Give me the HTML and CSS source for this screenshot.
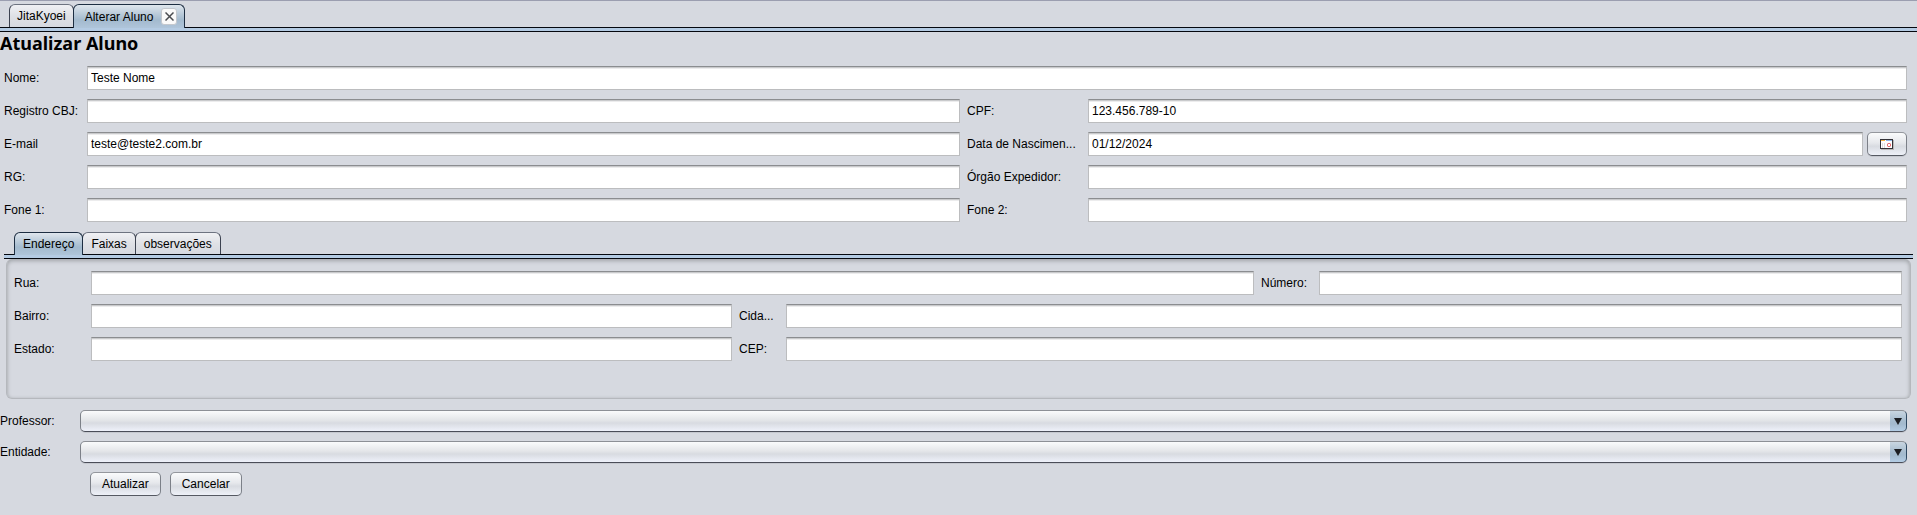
FILE: index.html
```html
<!DOCTYPE html>
<html lang="pt-BR">
<head>
<meta charset="utf-8">
<title>Alterar Aluno</title>
<link rel="stylesheet" href="styles.css">
</head>
<body>
<nav class="tabs">
  <div class="tab"><button type="button" class="tab-label">JitaKyoei</button></div>
  <div class="tab tab-active">
    <button type="button" class="tab-label">Alterar Aluno</button>
    <button type="button" class="close" aria-label="Fechar">
      <svg width="9" height="9" viewBox="0 0 9 9"><path d="M.5.5l8 8M8.500.5l-8 8" stroke="#4a4c50" stroke-width="1.500" fill="none"/></svg>
    </button>
  </div>
</nav>
<div class="strip"></div>
<main>
  <h1>Atualizar Aluno</h1>
  <form>
    <div class="grid student">
      <label for="nome">Nome:</label>
      <input class="field wide" id="nome" type="text" value="Teste Nome">
      <label for="cbj">Registro CBJ:</label>
      <input class="field" id="cbj" type="text">
      <label class="second" for="cpf">CPF:</label>
      <input class="field" id="cpf" type="text" value="123.456.789-10">
      <label for="email">E-mail</label>
      <input class="field" id="email" type="text" value="teste@teste2.com.br">
      <label class="second" for="nasc">Data de Nascimen...</label>
      <div class="date">
        <input class="field" id="nasc" type="text" value="01/12/2024">
        <button type="button" class="button calendar" aria-label="Calendário">
          <svg width="14" height="11" viewBox="0 0 14 11" shape-rendering="crispEdges">
            <path d="M1 1h13v10H1z" fill="#b9b6b6"/>
            <path d="M0 0h13v10H0z" fill="#333238"/>
            <path d="M1 1h11v8H1z" fill="#fff"/>
            <path d="M1 1h4v1H1z" fill="#f5b343"/>
            <path d="M6 1h6v1H6z" fill="#8fb6e8"/>
            <path d="M2 4h1v5H2zM4 4h1v5H4z" fill="#dedede"/>
            <rect x="7.500" y="4.500" width="3" height="3" rx="1" fill="none" stroke="#e0434a" shape-rendering="auto"/>
          </svg>
        </button>
      </div>
      <label for="rg">RG:</label>
      <input class="field" id="rg" type="text">
      <label class="second" for="orgao">Órgão Expedidor:</label>
      <input class="field" id="orgao" type="text">
      <label for="fone1">Fone 1:</label>
      <input class="field" id="fone1" type="text">
      <label class="second" for="fone2">Fone 2:</label>
      <input class="field" id="fone2" type="text">
    </div>

    <section class="details">
      <div class="tabs tabs-inner">
        <div class="tab tab-active"><button type="button" class="tab-label">Endereço</button></div>
        <div class="tab"><button type="button" class="tab-label">Faixas</button></div>
        <div class="tab"><button type="button" class="tab-label">observações</button></div>
      </div>
      <div class="strip"></div>
      <div class="panel">
        <div class="grid street">
          <label for="rua">Rua:</label>
          <input class="field" id="rua" type="text">
          <label class="second" for="numero">Número:</label>
          <input class="field" id="numero" type="text">
        </div>
        <div class="grid city">
          <label for="bairro">Bairro:</label>
          <input class="field" id="bairro" type="text">
          <label class="second" for="cidade">Cida...</label>
          <input class="field" id="cidade" type="text">
          <label for="estado">Estado:</label>
          <input class="field" id="estado" type="text">
          <label class="second" for="cep">CEP:</label>
          <input class="field" id="cep" type="text">
        </div>
      </div>
    </section>

    <div class="combos">
      <label for="professor">Professor:</label>
      <div class="combo"><select id="professor"><option></option></select></div>
      <label for="entidade">Entidade:</label>
      <div class="combo"><select id="entidade"><option></option></select></div>
    </div>
    <div class="actions">
      <button type="button" class="button">Atualizar</button>
      <button type="button" class="button">Cancelar</button>
    </div>
  </form>
</main>
</body>
</html>
```
FILE: styles.css
```css
* { box-sizing: border-box; }

body {
  margin: 0;
  border-top: 1px solid #9b9eb0;
  background: #d6d9e0;
  color: #000;
  font: 12px/16px "Liberation Sans", Arial, sans-serif;
}

button, input, select { margin: 0; color: inherit; font: inherit; }

.tabs {
  display: flex;
  padding: 3px 9px 0;
}

.tab {
  display: flex;
  align-items: center;
  height: 23px;
  padding: 0 7px;
  border: 1px solid #3c4250;
  border-top-color: #6d7380;
  border-bottom: 0;
  border-radius: 6px 6px 0 0;
  background: linear-gradient(#f0f1f4, #dfe1e6 50%, #d6d9e0);
}

.tab + .tab { margin-left: -1px; }

.tab-active {
  position: relative;
  gap: 8px;
  height: 24px;
  margin-bottom: -1px;
  padding: 0 7px 0 11px;
  border-color: #1d2e42;
  background: linear-gradient(#dfe6ed, #b9cad9 40%, #a3bace 65%, #afc5da);
}

.tab-label {
  padding: 0;
  border: 0;
  background: none;
}

.close {
  display: grid;
  place-items: center;
  width: 16px;
  height: 17px;
  padding: 0;
  border: 1px solid #c4c8ce;
  border-radius: 3px;
  background: #fafafa;
}

.strip {
  height: 5px;
  border: solid #05080f;
  border-width: 1px 0;
  background: #b4cbe3;
}

h1 {
  margin: 0;
  font: bold 18px/22px "Noto Sans", "Open Sans", sans-serif;
}

.grid {
  display: grid;
  align-items: center;
  row-gap: 9px;
}

.student {
  grid-template-columns: 83px 873fr 128px 819fr;
  padding: 12px 10px 0 4px;
}

.wide { grid-column: 2 / -1; }

.second { padding-left: 7px; white-space: nowrap; }

.field {
  width: 100%;
  min-width: 0;
  height: 24px;
  padding: 0 3px;
  border: 1px solid #bcbdbf;
  border-top-color: #8b8d90;
  border-radius: 0;
  outline: 0;
  background: linear-gradient(#c9cacc 1px, #ececed 1px, #ececed 2px, #fff 2px);
}

.date { display: flex; gap: 4px; }
.date .field { flex: 1; }

.button {
  height: 24px;
  padding: 0 11px;
  border: 1px solid #7c8088;
  border-top-color: #94979d;
  border-bottom-color: #555962;
  border-radius: 5px;
  background: linear-gradient(#fafbfc, #e6e8ec 45%, #d8dbe1 60%, #eef1f8);
  box-shadow: 0 1px #c5c8cf;
}

.calendar {
  display: grid;
  place-items: center;
  width: 40px;
  padding: 0;
}

.details { padding: 10px 4px 0; }

.tabs-inner { padding: 0 10px; }
.tabs-inner .tab { height: 22px; padding: 0 8px; }
.tabs-inner .tab-active { height: 23px; }

.panel {
  margin: 0 2px;
  padding: 12px 8px 37px 7px;
  border: solid #b5b8bd;
  border-width: 0 1px 1px;
  border-radius: 6px;
  box-shadow: inset 0 2px 4px #a3a6ab, inset 0 0 3px #c3c6ca;
}

.street { grid-template-columns: 77px 1163fr 65px 583fr; }
.city { grid-template-columns: 77px 641fr 54px 1116fr; margin-top: 9px; }

.combos {
  display: grid;
  grid-template-columns: 80px 1fr;
  align-items: center;
  row-gap: 9px;
  padding: 11px 10px 0 0;
}

.combo {
  position: relative;
  display: flex;
  height: 22px;
}

.combo select {
  width: 100%;
  appearance: none;
  padding: 0 24px 0 6px;
  border: 1px solid #7c8088;
  border-top-color: #8d9096;
  border-bottom-color: #4a4d58;
  border-right-color: #2f4a63;
  border-radius: 5px;
  background:
    linear-gradient(#c9d6e1, #a6bccf 50%, #a3bace 65%, #b4cde5) right / 16px 100% no-repeat,
    linear-gradient(#fafbfc, #e4e6e9 45%, #d8dbe1 60%, #eef1fa);
  box-shadow: 0 1px #c5c8cf;
}

.combo::after {
  content: "";
  position: absolute;
  top: 8px;
  right: 5px;
  border: solid transparent;
  border-width: 7px 4px 0;
  border-top-color: #1c1e22;
  pointer-events: none;
}

.actions {
  display: flex;
  gap: 9px;
  padding: 9px 0 0 90px;
}
```
